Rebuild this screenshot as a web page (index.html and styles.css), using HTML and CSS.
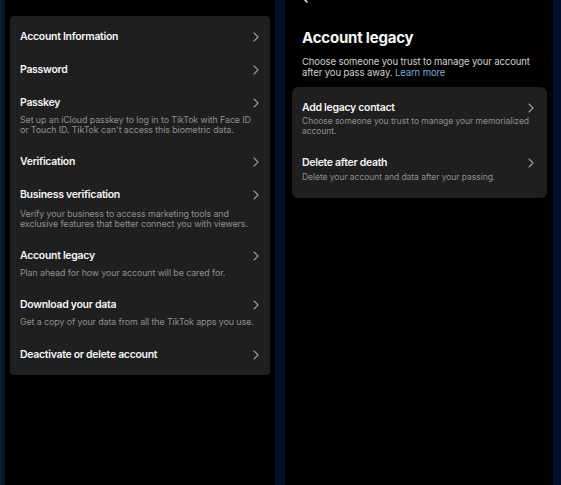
FILE: index.html
```html
<!DOCTYPE html>
<html lang="en">
<head>
<meta charset="utf-8">
<title>Account settings</title>
<link rel="stylesheet" href="styles.css">
</head>
<body>
<div class="screens">
  <section class="panel panel-left">
    <div class="card card-left">
      <div class="row"><div class="title">Account Information</div><svg class="chev" viewBox="0 0 6 10"><polyline points="1,1 5,5 1,9"/></svg></div>
      <div class="row"><div class="title">Password</div><svg class="chev" viewBox="0 0 6 10"><polyline points="1,1 5,5 1,9"/></svg></div>
      <div class="row has-desc"><div class="title">Passkey</div><svg class="chev" viewBox="0 0 6 10"><polyline points="1,1 5,5 1,9"/></svg><div class="desc">Set up an iCloud passkey to log in to TikTok with Face ID or Touch ID. TikTok can't access this biometric data.</div></div>
      <div class="row"><div class="title">Verification</div><svg class="chev" viewBox="0 0 6 10"><polyline points="1,1 5,5 1,9"/></svg></div>
      <div class="row has-desc"><div class="title">Business verification</div><svg class="chev" viewBox="0 0 6 10"><polyline points="1,1 5,5 1,9"/></svg><div class="desc desc-spaced">Verify your business to access marketing tools and exclusive features that better connect you with viewers.</div></div>
      <div class="row has-desc"><div class="title">Account legacy</div><svg class="chev" viewBox="0 0 6 10"><polyline points="1,1 5,5 1,9"/></svg><div class="desc">Plan ahead for how your account will be cared for.</div></div>
      <div class="row has-desc"><div class="title">Download your data</div><svg class="chev" viewBox="0 0 6 10"><polyline points="1,1 5,5 1,9"/></svg><div class="desc">Get a copy of your data from all the TikTok apps you use.</div></div>
      <div class="row"><div class="title">Deactivate or delete account</div><svg class="chev" viewBox="0 0 6 10"><polyline points="1,1 5,5 1,9"/></svg></div>
    </div>
  </section>
  <section class="panel panel-right">
    <div class="topbar"><svg class="back" viewBox="0 0 8 14"><polyline points="7,1 1,7 7,13"/></svg></div>
    <h1 class="heading">Account legacy</h1>
    <p class="intro">Choose someone you trust to manage your account after you pass away. <span class="link">Learn more</span></p>
    <div class="card card-right">
      <div class="row row-r"><div class="title">Add legacy contact</div><svg class="chev" viewBox="0 0 6 10"><polyline points="1,1 5,5 1,9"/></svg><div class="desc desc-r">Choose someone you trust to manage your memorialized account.</div></div>
      <div class="row row-r"><div class="title">Delete after death</div><svg class="chev" viewBox="0 0 6 10"><polyline points="1,1 5,5 1,9"/></svg><div class="desc desc-r">Delete your account and data after your passing.</div></div>
    </div>
  </section>
</div>
</body>
</html>
```
FILE: styles.css
```css
* { box-sizing: border-box; }
html, body { margin: 0; padding: 0; }
body {
  width: 561px;
  height: 485px;
  overflow: hidden;
  background: #03112a;
  font-family: Inter, "Noto Sans", "Liberation Sans", sans-serif;
  color: #f2f2f2;
}
.screens {
  display: flex;
  height: 485px;
  padding-left: 5px;
  gap: 10px;
  background: linear-gradient(90deg, #0b2038 0, #03112a 5px, #03112a 100%);
}
.panel {
  background: #000;
  height: 100%;
}
.panel-left {
  width: 270px;
  padding: 16px 5px 0 5px;
}
.panel-right {
  width: 268px;
  padding: 0 6px 0 7px;
}
.card {
  background: #1f1f1f;
  border-radius: 4px;
}
.card-left {
  padding: 4px 0 4px;
}
.row {
  display: grid;
  grid-template-columns: 1fr auto;
  align-items: center;
  padding: 9.5px 10px 9.5px 10px;
}
.row.has-desc {
  padding-bottom: 10.8px;
}
.title {
  font-size: 10.5px;
  font-weight: 600;
  letter-spacing: -0.3px;
  line-height: 14px;
  color: #f4f4f4;
}
.desc {
  grid-column: 1 / -1;
  font-size: 8.9px;
  letter-spacing: -0.1px;
  line-height: 10px;
  color: #8f8f8f;
  margin-top: 5px;
  padding-right: 6px;
}
.desc-spaced { margin-top: 7px; }
.chev {
  width: 6px;
  height: 10px;
  margin-right: 1px;
  fill: none;
  stroke: #9c9c9c;
  stroke-width: 1.1;
  stroke-linecap: round;
  stroke-linejoin: round;
}
.topbar {
  height: 14px;
  margin-top: -11px;
  padding-left: 8px;
}
.back {
  display: block;
  width: 8px;
  height: 14px;
  fill: none;
  stroke: #e6e6e6;
  stroke-width: 1.6;
  stroke-linecap: round;
  stroke-linejoin: round;
}
.heading {
  margin: 25px 0 0 10px;
  font-size: 15px;
  font-weight: 700;
  letter-spacing: -0.2px;
  line-height: 20px;
  color: #f6f6f6;
}
.intro {
  margin: 8px 0 0 10px;
  font-size: 9.5px;
  letter-spacing: -0.1px;
  line-height: 11.3px;
  color: #d2d2d2;
  padding-right: 4px;
}
.link { color: #7fa6dc; }
.card-right {
  margin-top: 8px;
  padding: 4px 0 6px;
  border-radius: 6px;
}
.row-r {
  padding: 10px 12px 10px 10px;
}
.desc-r {
  margin-top: 1.5px;
  font-size: 8.5px;
  letter-spacing: -0.05px;
  padding-right: 0;
}
```
